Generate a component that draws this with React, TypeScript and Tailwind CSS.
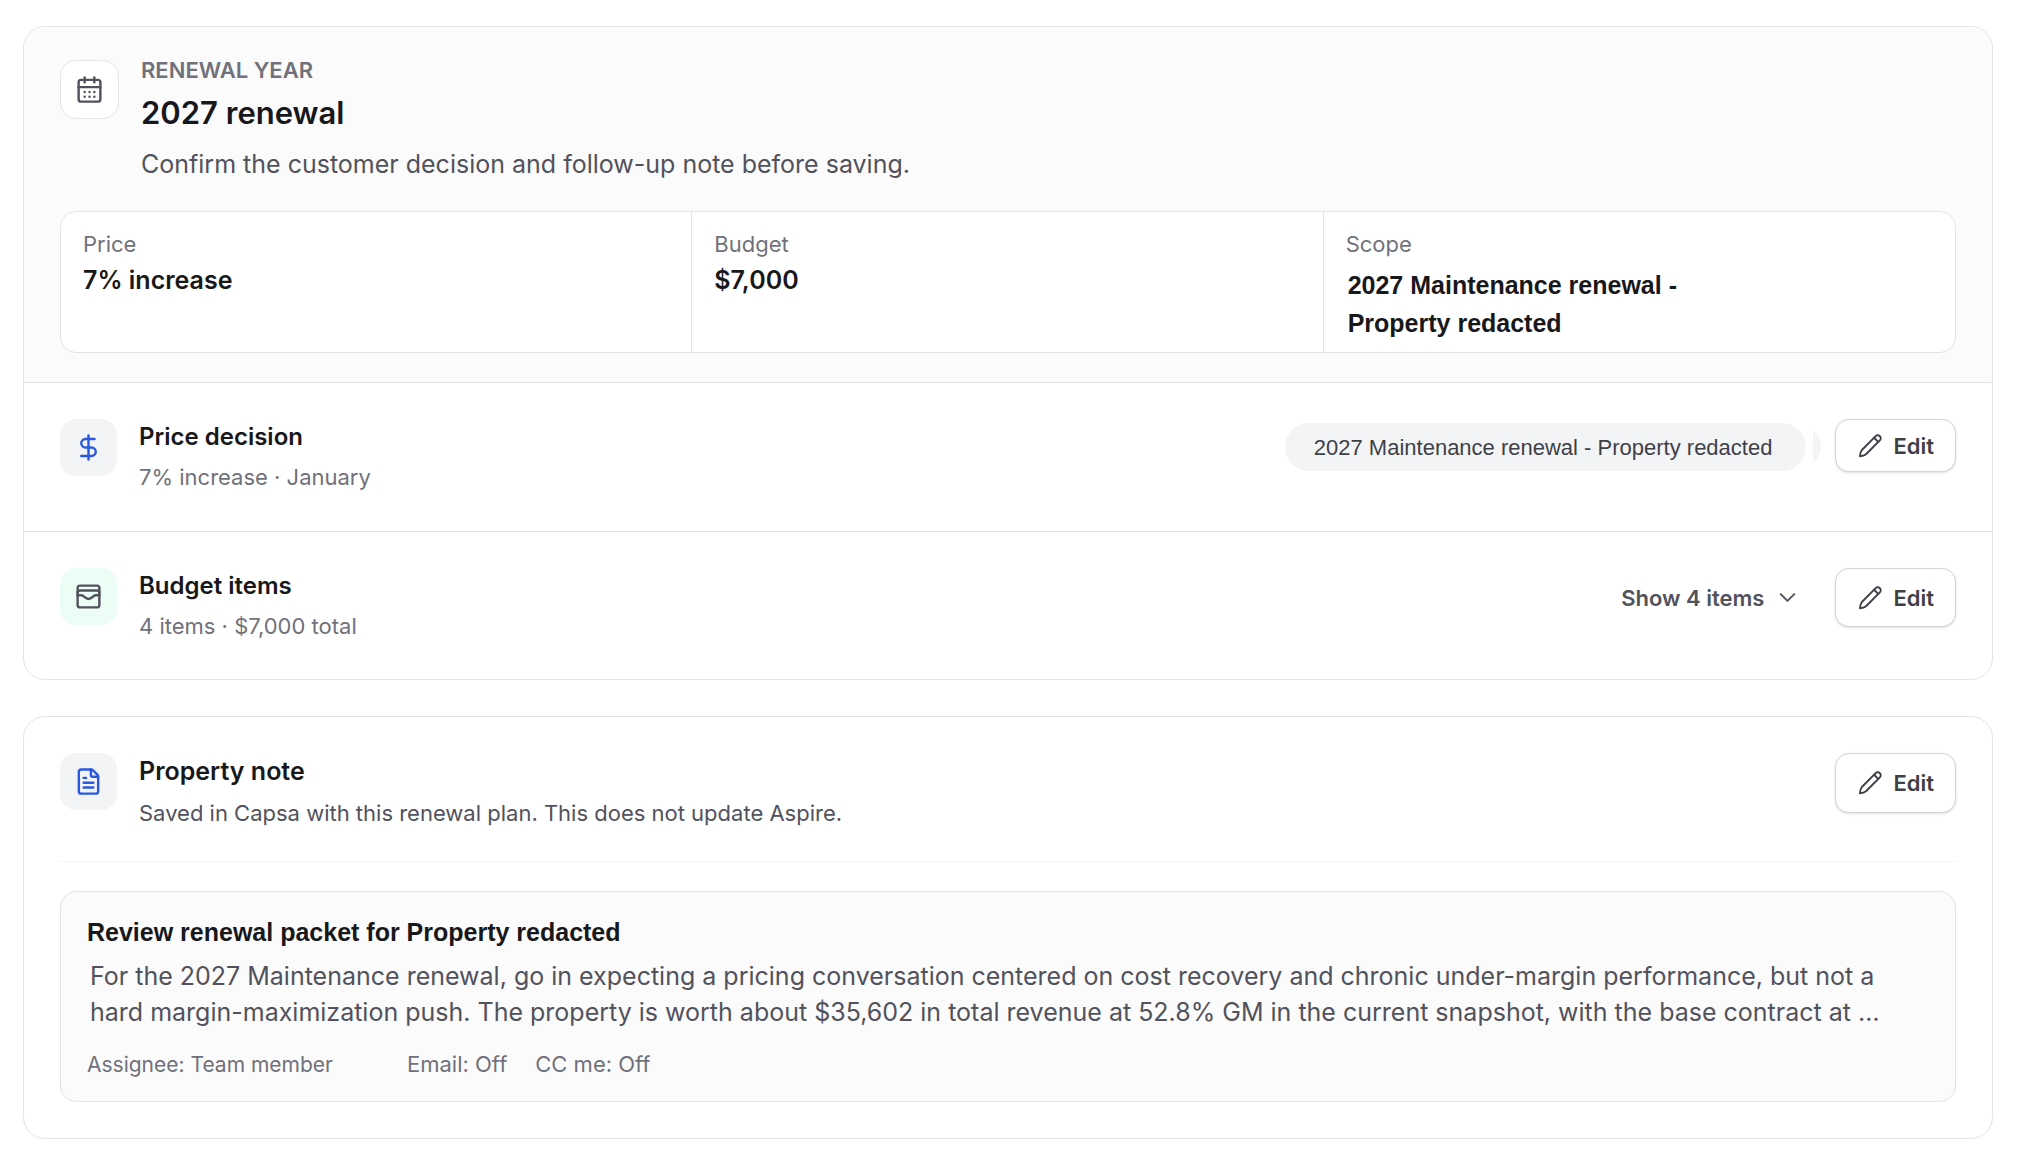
import { useState } from "react";
import type { ReactNode } from "react";
import { CalendarDays, ChevronDown, DollarSign, FileText, WalletCards } from "lucide-react";

interface RowProps {
  icon: ReactNode;
  iconClass: string;
  title: string;
  titleClass: string;
  subtitle: string;
  subtitleClass: string;
  children: ReactNode;
}

function PencilIcon() {
  return (
    <svg
      aria-hidden="true"
      viewBox="0 0 24 24"
      className="size-[26px]"
      fill="none"
      stroke="currentColor"
      strokeWidth="1.75"
      strokeLinecap="round"
      strokeLinejoin="round"
    >
      <path d="M17.2 2.9a2.7 2.7 0 0 1 3.9 3.9L8.3 19.6c-1.4 1.2-3.3 1.7-5.6 1.8.1-2.2.6-4.2 1.8-5.7Z" />
      <path d="m15.8 4.4 3.8 3.8" />
    </svg>
  );
}

function EditButton({ label, className }: { label: string; className: string }) {
  return (
    <button
      type="button"
      aria-label={label}
      className={`flex shrink-0 items-center gap-2.5 rounded-[14px] border border-zinc-300 bg-white px-[21px] text-[22px] leading-8 font-semibold text-zinc-700 shadow-sm ${className}`}
    >
      <PencilIcon />
      Edit
    </button>
  );
}

function Row({ icon, iconClass, title, titleClass, subtitle, subtitleClass, children }: RowProps) {
  return (
    <div className="flex items-start gap-[22px]">
      <div className={`flex size-[57px] shrink-0 items-center justify-center rounded-2xl ${iconClass}`}>{icon}</div>
      <div className="min-w-0 flex-1">
        <h3 className={`leading-9 font-semibold text-zinc-900 ${titleClass}`}>{title}</h3>
        <p className={`text-[22px] leading-8 ${subtitleClass}`}>{subtitle}</p>
      </div>
      <div className="flex shrink-0 items-start gap-3.5">{children}</div>
    </div>
  );
}

export default function App() {
  const [expanded, setExpanded] = useState(false);

  return (
    <main className="min-h-screen bg-white pt-[26px] pr-[31px] pb-4 pl-[23px] font-['Inter',sans-serif]">
      <section className="overflow-hidden rounded-[22px] border border-zinc-200 bg-white">
        {/* Renewal summary */}
        <div className="border-b border-zinc-200 bg-[#fbfbfb] px-9 pt-[33px] pb-[29px]">
          <div className="flex items-start gap-[22px]">
            <div className="flex size-[59px] shrink-0 items-center justify-center rounded-2xl border border-zinc-200 bg-white text-zinc-600">
              <CalendarDays size={29} />
            </div>
            <div>
              <p className="text-[22px] leading-5 font-semibold text-zinc-500 uppercase">Renewal year</p>
              <h2 className="mt-3 text-[31px] leading-[42px] font-semibold text-zinc-900">2027 renewal</h2>
              <p className="mt-2.5 text-[25px] leading-10 text-zinc-600">
                Confirm the customer decision and follow-up note before saving.
              </p>
            </div>
          </div>

          <dl className="mt-[27px] grid grid-cols-3 divide-x divide-zinc-200 rounded-2xl border border-zinc-200 bg-white">
            <div className="px-[22px] pt-4 pb-2">
              <dt className="text-[22px] leading-8 text-zinc-500">Price</dt>
              <dd className="text-[25px] leading-10 font-semibold text-zinc-900">7% increase</dd>
            </div>
            <div className="px-[22px] pt-4 pb-2">
              <dt className="text-[22px] leading-8 text-zinc-500">Budget</dt>
              <dd className="text-[25px] leading-10 font-semibold text-zinc-900">$7,000</dd>
            </div>
            <div className="px-[22px] pt-4 pb-2.5">
              <dt className="text-[22px] leading-8 text-zinc-500">Scope</dt>
              <dd className="mt-1.5 max-w-96 pl-0.5 font-['Liberation_Sans',sans-serif] text-[25px] leading-[38px] font-bold text-zinc-900">
                2027 Maintenance renewal - Property redacted
              </dd>
            </div>
          </dl>
        </div>

        <div className="border-b border-zinc-200 px-9 pt-9 pb-[38px]">
          <Row
            icon={<DollarSign size={29} />}
            iconClass="bg-gray-100 text-[#2a58e0]"
            title="Price decision"
            titleClass="text-[24px]"
            subtitle="7% increase · January"
            subtitleClass="mt-1.5 text-zinc-500"
          >
            <div className="mt-1 flex items-center gap-[7px]">
              <span className="rounded-full bg-gray-100 pt-[9px] pr-[34px] pb-[7px] pl-[29px] font-['Liberation_Sans',sans-serif] text-[22px] leading-8 text-zinc-700">
                2027 Maintenance renewal - Property redacted
              </span>
              {/* tail of the next tag, cut off by the row */}
              <span className="flex h-10 w-2 justify-end overflow-hidden">
                <span className="h-10 w-16 shrink-0 rounded-full bg-gray-100" />
              </span>
            </div>
            <EditButton label="Edit price decision" className="h-[53px]" />
          </Row>
        </div>

        <div className="px-9 pt-9 pb-[37px]">
          <Row
            icon={<WalletCards size={29} />}
            iconClass="bg-emerald-50 text-zinc-600"
            title="Budget items"
            titleClass="text-[24px]"
            subtitle="4 items · $7,000 total"
            subtitleClass="mt-1.5 text-zinc-500"
          >
            <button
              type="button"
              aria-expanded={expanded}
              onClick={() => setExpanded(!expanded)}
              className="flex h-[59px] items-center gap-2.5 px-5 text-[22px] leading-8 font-semibold text-zinc-600"
            >
              Show 4 items
              <ChevronDown size={27} strokeWidth={1.75} />
            </button>
            <EditButton label="Edit budget items" className="h-[59px]" />
          </Row>
        </div>
      </section>

      <section className="mt-9 rounded-[22px] border border-zinc-200 bg-white px-9 py-9">
        <div className="border-b border-zinc-100 pb-8">
          <Row
            icon={<FileText size={29} />}
            iconClass="bg-gray-100 text-[#2a58e0]"
            title="Property note"
            titleClass="text-[25px]"
            subtitle="Saved in Capsa with this renewal plan. This does not update Aspire."
            subtitleClass="mt-2 text-zinc-600"
          >
            <EditButton label="Edit property note" className="h-[60px]" />
          </Row>
        </div>

        <article className="mt-[29px] rounded-2xl border border-zinc-200 bg-[#fbfbfb] px-[26px] pt-[22px] pb-5">
          <h4 className="font-['Liberation_Sans',sans-serif] text-[25px] leading-9 font-bold text-zinc-900">
            Review renewal packet for Property redacted
          </h4>
          <p className="mt-2 px-[3px] text-[25px] leading-9 text-zinc-600">
            For the 2027 Maintenance renewal, go in expecting a pricing conversation centered on cost recovery and
            chronic under-margin performance, but not a hard margin-maximization push. The property is worth about
            $35,602 in total revenue at 52.8% GM in the current snapshot, with the base contract at …
          </p>
          <div className="mt-[18px] flex items-baseline text-[22px] leading-8 text-zinc-500">
            <span className="w-80 text-[21px]">Assignee: Team member</span>
            <span>Email: Off</span>
            <span className="ml-7">CC me: Off</span>
          </div>
        </article>
      </section>
    </main>
  );
}
